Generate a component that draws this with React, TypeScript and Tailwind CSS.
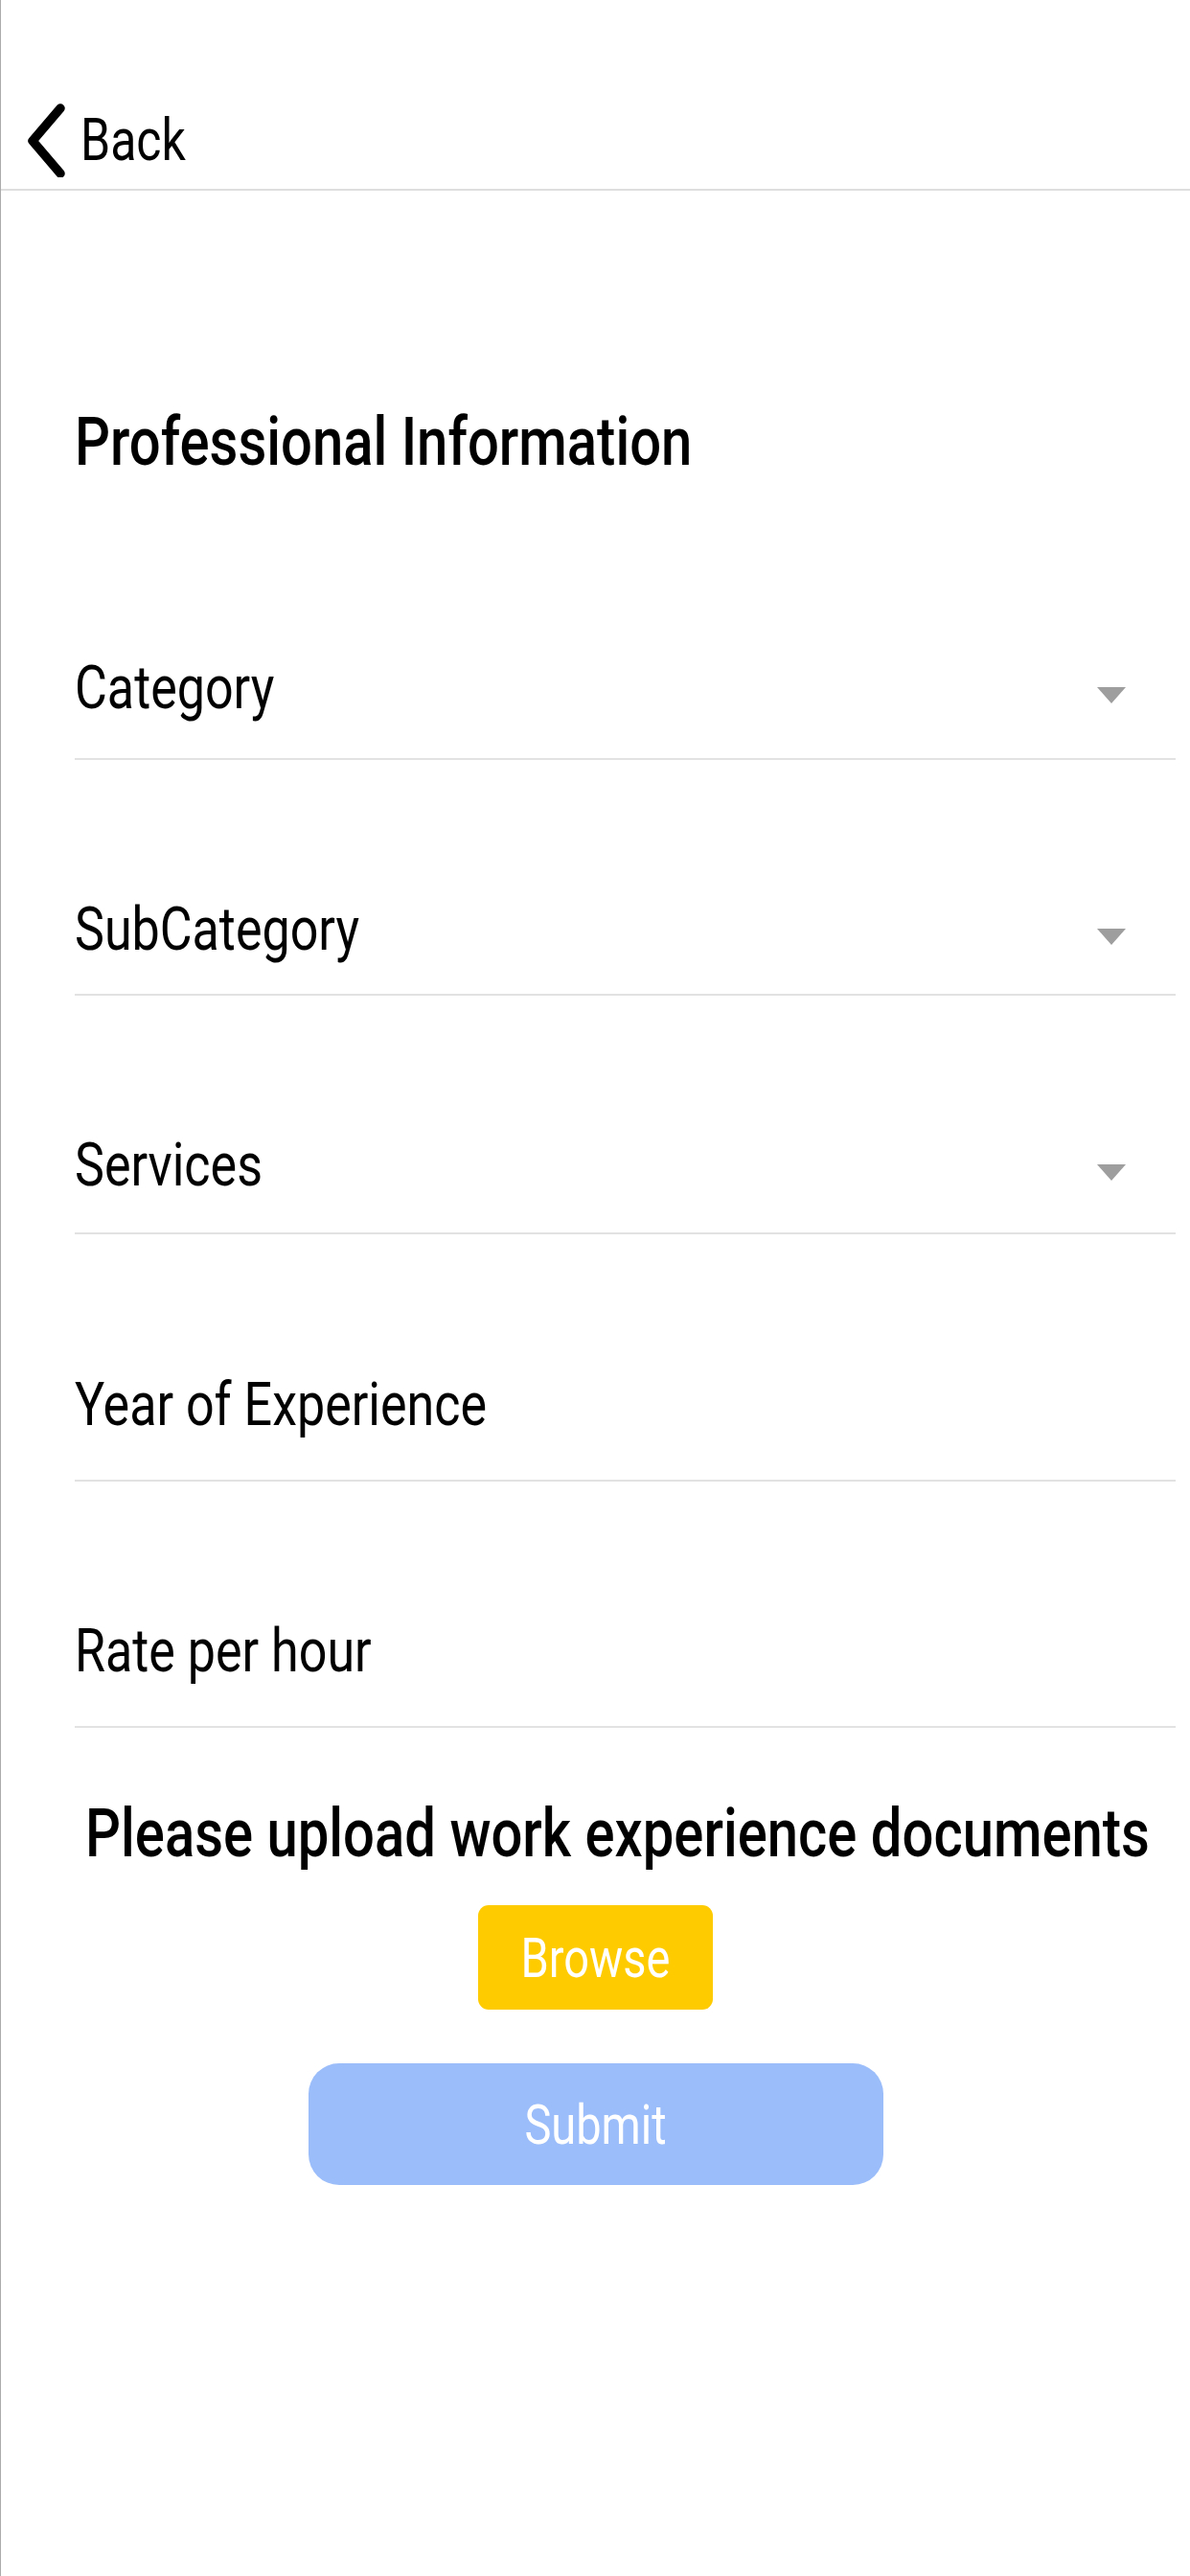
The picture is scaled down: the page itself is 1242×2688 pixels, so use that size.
import React from 'react';

const fields = [
  { label: 'Category', dropdown: true, pt: 'pt-[192px]', pb: 'pb-[43px]' },
  { label: 'SubCategory', dropdown: true, pt: 'pt-[147px]', pb: 'pb-[37px]' },
  { label: 'Services', dropdown: true, pt: 'pt-[147px]', pb: 'pb-[40px]' },
  { label: 'Year of Experience', dropdown: false, pt: 'pt-[148px]', pb: 'pb-[48px]' },
  { label: 'Rate per hour', dropdown: false, pt: 'pt-[147px]', pb: 'pb-[48px]' },
];

const Caret = () => (
  <svg width="30" height="17" viewBox="0 0 30 17" className="mr-[52px] mt-[14px]">
    <polygon points="0,0 30,0 15,17" fill="#9e9e9e" />
  </svg>
);

const App: React.FC = () => {
  return (
    <div className="min-h-[2688px] bg-white border-l border-[#ababab] font-['Roboto','Liberation_Sans',sans-serif] text-black">
      {/* header */}
      <div className="h-[199px] border-b-2 border-[#dedede] flex items-end pb-[12px] pl-[26px]">
        <div className="flex items-center h-[78px]">
          <svg width="44" height="78" viewBox="0 0 44 78">
            <path d="M36 6 L7 40 L36 74" fill="none" stroke="#000" strokeWidth="9.5" strokeLinecap="round" strokeLinejoin="round" />
          </svg>
          <span className="ml-[13px] text-[50px] leading-[60px] inline-block scale-y-[1.22]">Back</span>
        </div>
      </div>

      <div className="pl-[77px] pr-[15px]">
        <div className="mt-[227px] h-[70px] flex items-center">
          <span className="text-[58px] leading-[70px] font-medium inline-block scale-y-[1.22] origin-left">Professional Information</span>
        </div>

        {fields.map(f => (
          <div key={f.label} className={`${f.pt} ${f.pb} border-b-2 border-[#e2e2e2]`}>
            <div className="h-[60px] flex items-center justify-between">
              <span className="text-[52px] leading-[60px] inline-block scale-y-[1.22] origin-left">{f.label}</span>
              {f.dropdown && <Caret />}
            </div>
          </div>
        ))}
      </div>

      <div className="mt-[77px] flex flex-col items-center">
        <div className="h-[66px] flex items-center pl-[46px]">
          <span className="text-[58px] leading-[66px] font-medium inline-block scale-y-[1.22] whitespace-nowrap">Please upload work experience documents</span>
        </div>
        <button className="mt-[42px] w-[245px] h-[109px] rounded-[11px] bg-[#fecb00] text-white flex items-center justify-center">
          <span className="text-[47px] leading-[56px] inline-block scale-y-[1.22]">Browse</span>
        </button>
        <button className="mt-[56px] w-[600px] h-[127px] rounded-[32px] bg-[#9bbdf9] text-white flex items-center justify-center">
          <span className="text-[47px] leading-[56px] inline-block scale-y-[1.22]">Submit</span>
        </button>
      </div>
    </div>
  );
};

export default App;
